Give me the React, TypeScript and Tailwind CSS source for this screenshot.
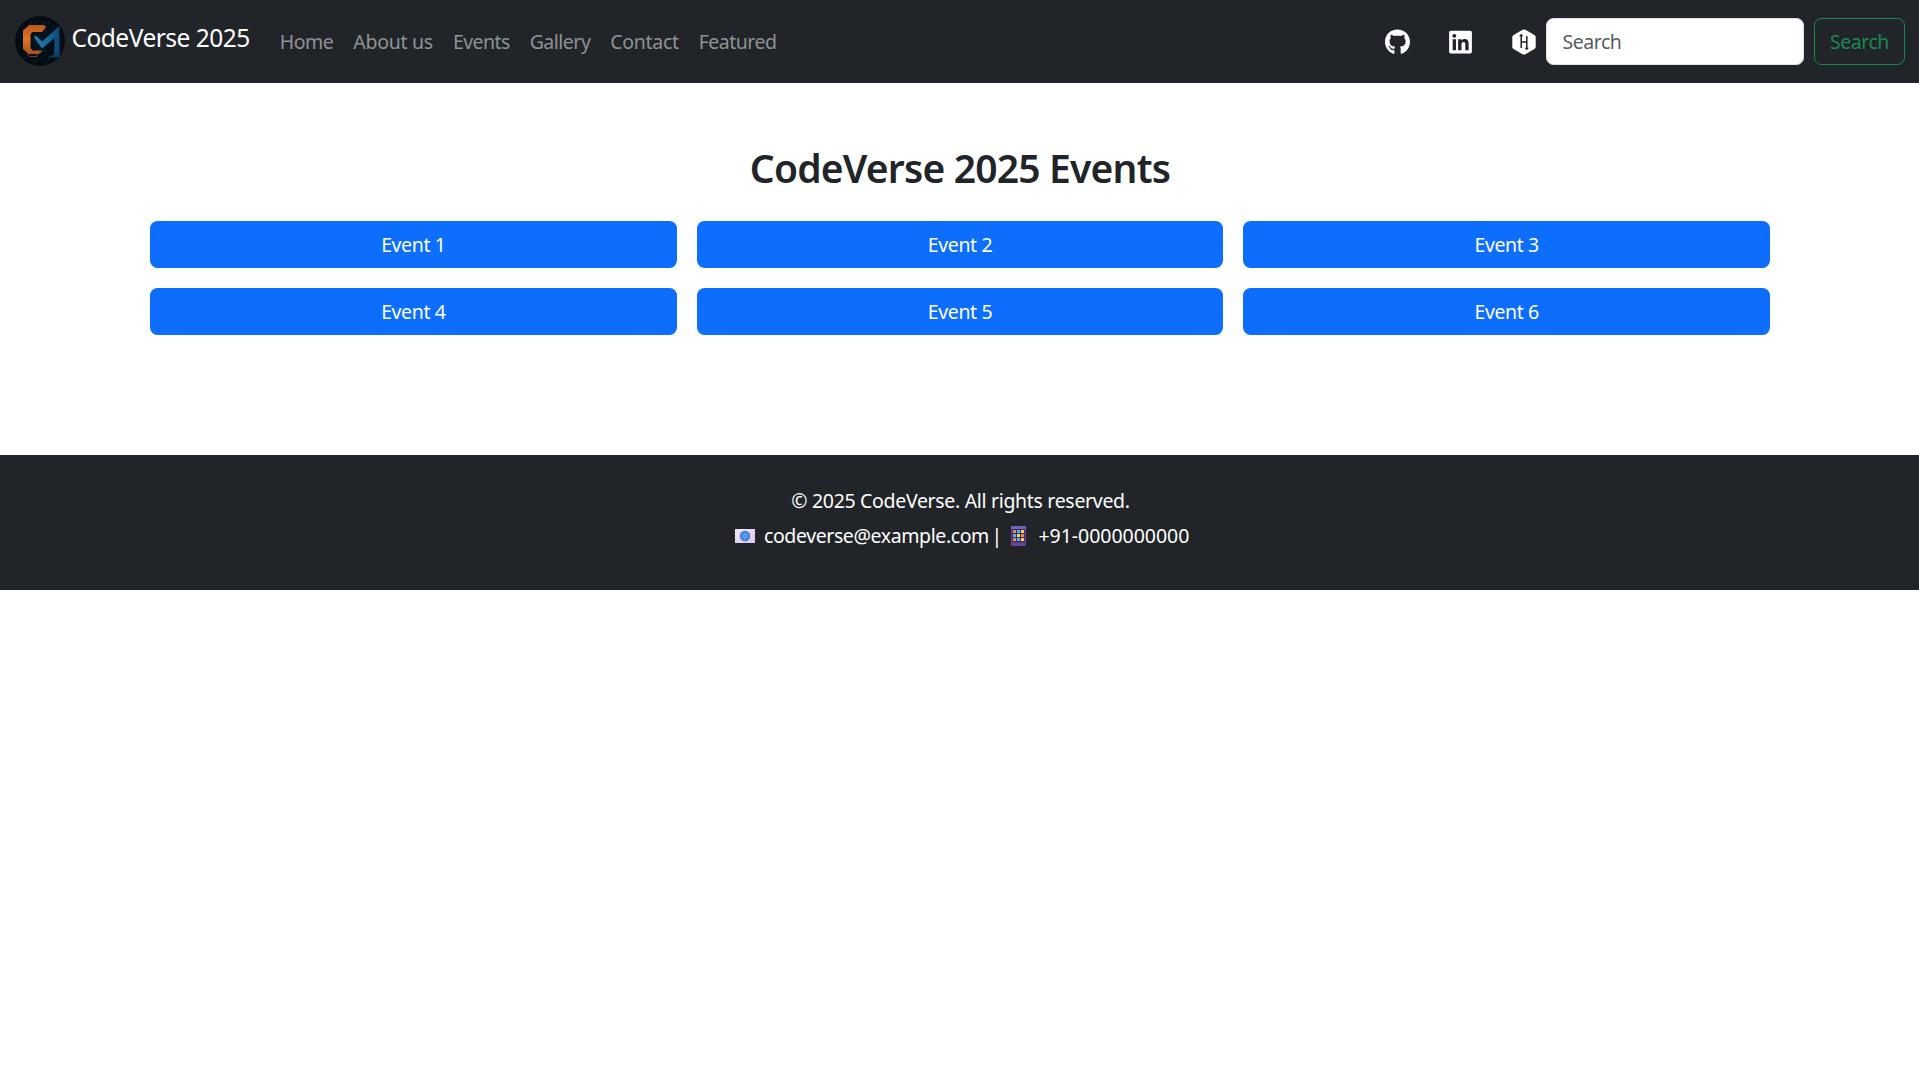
import { FaGithub, FaLinkedin } from 'react-icons/fa';

const links = [
  { label: 'Home', style: 'w-[53.6px] tracking-[-0.46px]' },
  { label: 'About us', style: 'w-[79.7px] tracking-[-0.27px]' },
  { label: 'Events', style: 'w-[56.7px] tracking-[-0.58px]' },
  { label: 'Gallery', style: 'w-[60.7px] tracking-[-0.5px]' },
  { label: 'Contact', style: 'w-[68.4px] tracking-[-0.32px]' },
  { label: 'Featured', style: 'w-[77.7px] tracking-[-0.51px]' },
];

const events = ['Event 1', 'Event 2', 'Event 3', 'Event 4', 'Event 5', 'Event 6'];

function Logo() {
  return (
    <svg viewBox="0 0 50 50" className="h-[50px] w-[50px] shrink-0">
      <defs>
        <linearGradient id="orange" x1="0" y1="0" x2="0" y2="1">
          <stop offset="0" stopColor="#b9561a" />
          <stop offset="0.5" stopColor="#e2741f" />
          <stop offset="1" stopColor="#a65222" />
        </linearGradient>
        <linearGradient id="blue" x1="0" y1="0" x2="1" y2="0">
          <stop offset="0" stopColor="#2a7fae" />
          <stop offset="0.6" stopColor="#17669c" />
          <stop offset="1" stopColor="#0d4670" />
        </linearGradient>
        <radialGradient id="disc">
          <stop offset="0" stopColor="#04151f" />
          <stop offset="1" stopColor="#030b12" />
        </radialGradient>
      </defs>
      <circle cx="25" cy="25" r="25" fill="url(#disc)" />
      <g fill="#0a2732">
        {[[15, 5], [22, 4], [28, 6], [34, 5], [38, 9], [20, 8], [5, 17], [4, 28], [24, 18], [30, 14], [22, 27], [25, 35], [29, 34], [23, 36], [27, 42], [33, 41], [20, 45], [31, 46], [10, 41], [46, 25], [36, 12]].map(([x, y]) => (
          <rect key={`${x}-${y}`} x={x} y={y} width="1" height="2" />
        ))}
      </g>
      <path d="M14 9H29.500l1.500 2-4 5H17.500L15.500 18v14l2 2.500H27.500L24 38H13.500L8 33V14.500z" fill="url(#orange)" />
      <path d="M12 37.500l2.500 3H22v-2.500" fill="none" stroke="#874117" strokeWidth="0.9" />
      <path d="M18.500 20.500l3-.5 5.500 5.500L44.500 10v31l-7 .2 2-3.700V22L27 32.500z" fill="url(#blue)" />
      <path d="M33 41.200h11l.5-8-5 5z" fill="#0b3f66" />
    </svg>
  );
}

function HackerrankIcon() {
  return (
    <svg viewBox="0 0 24 26" className="h-[26px] w-6">
      <path d="M10.600.8a2.800 2.800 0 0 1 2.800 0l9 5.200c.9.500 1.300 1.400 1.300 2.300v9.400c0 .9-.4 1.800-1.300 2.300l-9 5.200a2.800 2.800 0 0 1-2.800 0l-9-5.200C.7 19.500.3 18.600.3 17.700V8.300C.3 7.400.7 6.500 1.600 6z" fill="currentColor" />
      <path d="M9.200 6.500v12.500M14.800 7v12.500M9.200 13h5.600" fill="none" stroke="#212529" strokeWidth="1.500" />
      <path d="M7 7.200l2.200-2.400 2.200 2.400zM12.600 18.800l2.200 2.400 2.200-2.400z" fill="#212529" />
    </svg>
  );
}

function MailIcon() {
  return (
    <svg viewBox="0 0 20 14" className="mt-[9px] ml-[5px] h-3.5 w-5 shrink-0">
      <defs>
        <linearGradient id="paper" x1="0" y1="0" x2="1" y2="1">
          <stop offset="0" stopColor="#f3eaf6" />
          <stop offset="1" stopColor="#dcc5ee" />
        </linearGradient>
      </defs>
      <rect width="20" height="14" fill="url(#paper)" />
      <path d="M0 0l7 6M20 0l-7 6M0 14l6-5M20 14l-6-5" stroke="#d9cbe6" strokeWidth="0.8" />
      <circle cx="10" cy="7" r="5.200" fill="#357bd8" />
      <circle cx="10" cy="7" r="1.500" fill="none" stroke="#a8c6ee" strokeWidth="0.8" />
      <path d="M11.600 5.300v2.400c0 1.400 1.700 1 1.700-.7a3.300 3.300 0 1 0-1.600 2.900" fill="none" stroke="#86afe8" strokeWidth="0.7" />
    </svg>
  );
}

function PhoneIcon() {
  const dots = ['#ff8a3c', '#45bdf5', '#ffe04a', '#45bdf5', '#ffe04a', '#ff8a3c', '#ff8a3c', '#45bdf5', '#ffe04a'];
  return (
    <svg viewBox="0 0 15 20" className="mt-1.5 ml-[8.7px] h-5 w-[15px] shrink-0">
      <rect width="15" height="20" rx="1" fill="#6d4596" />
      <path d="M0 3V1a1 1 0 0 1 1-1h13a1 1 0 0 1 1 1v2z" fill="#6966bd" />
      <rect x="1" y="3" width="13" height="13.500" fill="#432b66" />
      {dots.map((c, i) => (
        <rect key={i} x={2 + (i % 3) * 4} y={4 + Math.floor(i / 3) * 4} width="3" height="3" rx="0.5" fill={c} />
      ))}
    </svg>
  );
}

export default function App() {
  return (
    <div className="min-h-[1079px] bg-white font-['Noto_Sans',sans-serif] text-[19.5px] leading-[31px] text-[#212529]">
      <nav className="flex h-[83px] items-center bg-[#212529] pr-3.5 pl-[15px]">
        <a href="#" className="-mt-px flex h-[50px] w-[235px] shrink-0 gap-[6.5px] text-[24.5px] leading-[33px] tracking-[-0.5px] whitespace-nowrap text-white">
          <Logo />
          <span className="mt-[5px]">CodeVerse 2025</span>
        </a>
        <ul className="ml-[29.700px] flex gap-5 text-[#909294]">
          {links.map((link) => (
            <li key={link.label} className={link.style}>
              <a href="#" className="whitespace-nowrap">{link.label}</a>
            </li>
          ))}
        </ul>
        <div className="mr-2.5 ml-auto flex items-center text-white">
          <FaGithub className="h-[26px] w-[25px]" />
          <FaLinkedin className="ml-[39px] h-[26px] w-[23px]" />
          <span className="ml-10">
            <HackerrankIcon />
          </span>
        </div>
        <form className="flex gap-2.5">
          <input
            type="search"
            placeholder="Search"
            className="h-[47px] w-[258px] rounded-[7.5px] border border-[#dee2e6] bg-white px-[15.5px] leading-[31px] tracking-[-0.47px] placeholder:text-[#595c5f]"
          />
          <button type="button" className="h-[47px] w-[91px] rounded-[7.5px] border border-[#198754] tracking-[-0.47px] text-[#198754]">
            Search
          </button>
        </form>
      </nav>

      <main className="ml-[150px] h-[372px] w-[1620px] pt-[58px]">
        <h2 className="text-center text-[39px] leading-[53px] font-semibold tracking-[-0.8px]">CodeVerse 2025 Events</h2>
        <div className="mt-[27px] grid grid-cols-3 gap-5">
          {events.map((event) => (
            <button key={event} type="button" className="h-[47px] rounded-[7.5px] bg-[#0d6efd] tracking-[-0.38px] text-white">
              {event}
            </button>
          ))}
        </div>
      </main>

      <footer className="h-[135px] bg-[#212529] pt-[30px] text-white">
        <p className="pl-[2px] text-center tracking-[-0.32px]">© 2025 CodeVerse. All rights reserved.</p>
        <p className="mx-auto mt-1 flex w-[459px] whitespace-nowrap">
          <MailIcon />
          <span className="ml-[9px] w-[225px] tracking-[-0.4px]">codeverse@example.com</span>
          <span className="ml-[2.600px] w-[10.700px]">|</span>
          <PhoneIcon />
          <span className="ml-[12.500px] tracking-[-0.03px]">+91-0000000000</span>
        </p>
      </footer>
    </div>
  );
}
